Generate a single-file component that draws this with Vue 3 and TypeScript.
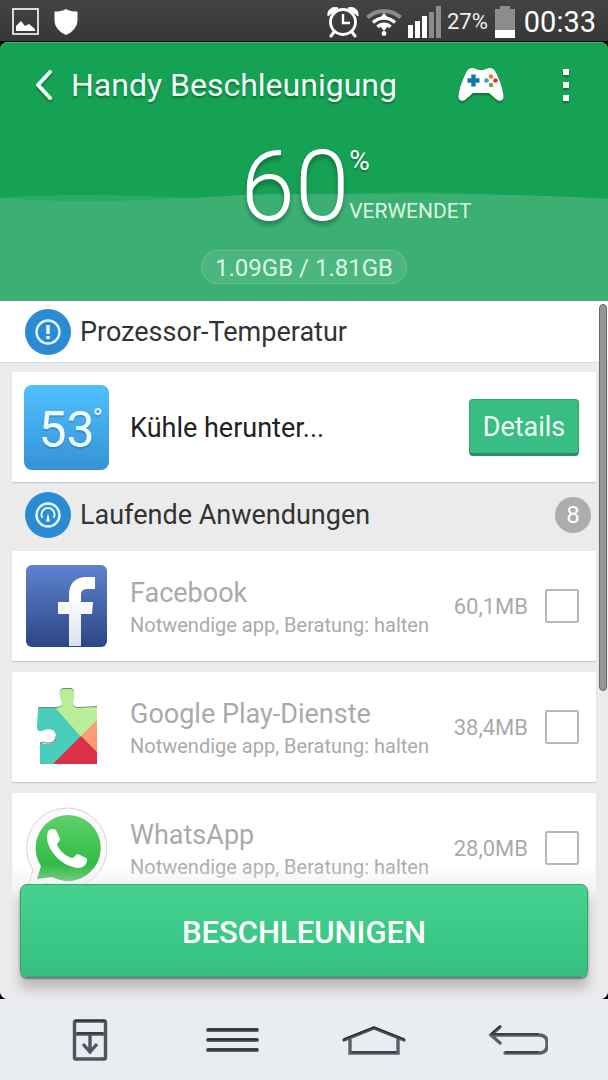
<script setup lang="ts">
import { ref } from 'vue'

interface RunningApp {
  id: string
  name: string
  size: string
  checked: boolean
}

const apps = ref<RunningApp[]>([
  { id: 'facebook', name: 'Facebook', size: '60,1MB', checked: false },
  { id: 'play', name: 'Google Play-Dienste', size: '38,4MB', checked: false },
  { id: 'whatsapp', name: 'WhatsApp', size: '28,0MB', checked: false },
])
</script>

<template>
  <div class="phone">
    <div class="status">
      <svg class="st-pic" viewBox="0 0 27 27" width="27" height="27">
        <rect x="1" y="1" width="25" height="25" fill="none" stroke="#fff" stroke-width="1.6" />
        <path d="M4 23v-5l5-5 4 5 4-2 6 5v2z" fill="#fff" />
      </svg>
      <svg class="st-shield" viewBox="0 0 24 26" width="24" height="26">
        <path d="M12 0C9 2 5 2.500 .5 2.500V11c0 7 5 12 11.500 15C18.500 23 23.500 18 23.500 11V2.500C19 2.500 15 2 12 0z" fill="#fff" />
      </svg>
      <span class="grow"></span>
      <svg class="st-alarm" viewBox="0 0 32 32" width="32" height="32">
        <circle cx="16" cy="16" r="12.500" fill="none" stroke="#fff" stroke-width="2.800" />
        <path d="M16 8v9h7" fill="none" stroke="#fff" stroke-width="2.400" />
        <path d="M1 10C0 4 5 0 11 2zM31 10C32 4 27 0 21 2z" fill="#fff" stroke="#fff" stroke-linejoin="round" />
        <path d="M7 26l-3 4M25 26l3 4" stroke="#fff" stroke-width="3" stroke-linecap="round" />
      </svg>
      <svg class="st-wifi" viewBox="0 0 36 28" width="36" height="28">
        <path d="M1.500 9.500a24 24 0 0 1 33 0" fill="none" stroke="#8c8c8c" stroke-width="4" />
        <path d="M7 14.500a16 16 0 0 1 22 0M11.500 19a9 9 0 0 1 13 0" fill="none" stroke="#fff" stroke-width="3.400" />
        <path d="M18 5l5 6H13zM18 23l-4-5h8z" fill="#fff" />
        <circle cx="18" cy="25.500" r="2.400" fill="#fff" />
      </svg>
      <svg class="st-signal" viewBox="0 0 33 32" width="33" height="32">
        <path d="M0 19h5v13H0zM7 15h5v17H7zM14 10h5v22h-5z" fill="#fff" />
        <path d="M21 6h5v26h-5zM28 0h5v32h-5z" fill="#8c8c8c" />
      </svg>
      <span class="st-pct">27%</span>
      <svg class="st-batt" viewBox="0 0 20 32" width="20" height="32">
        <path d="M5 0h10v3h5v21H0V3h5z" fill="#8c8c8c" />
        <path d="M0 24h20v8H0z" fill="#fff" />
      </svg>
      <span class="st-time">00:33</span>
    </div>

    <main class="app">
      <header class="hero">
        <svg class="wave" viewBox="0 0 608 110" preserveAspectRatio="none">
          <path d="M0 7C50 2 130 4 200 7C260 9 320 3 370 2C430 0 470 2 530 5V20H0z" fill="#28aa63" />
          <path d="M0 7C60 12 150 10 210 6C260 2 300 3 360 3C440 3 540 3 608 8V110H0z" fill="#3cb073" />
        </svg>
        <div class="toolbar">
          <button class="icon-btn back" aria-label="Zurück">
            <svg viewBox="0 0 20 32" width="20" height="32">
              <path d="M16 3L4 16l12 13" fill="none" stroke="#f0fff5" stroke-width="4" stroke-linecap="round" stroke-linejoin="round" />
            </svg>
          </button>
          <h1 class="title">Handy Beschleunigung</h1>
          <span class="grow"></span>
          <button class="icon-btn pad" aria-label="Spiele">
            <svg viewBox="0 0 46 36" width="46" height="36">
              <path d="M9 4C11 0 15 .5 18 2c2 1.500 8 1.500 10 0 3-1.500 7-2 9 2 4 7 8 18 8.500 25 .3 5-4 6-7 3.500L31 26H15l-7.500 6.500C4.500 35 .2 34 .5 29 1 22 5 11 9 4z" fill="#fff" />
              <path d="M15.500 7.500v12M9.500 13.500h12" stroke="#1279a8" stroke-width="4.400" />
              <circle cx="33" cy="9.500" r="2.300" fill="#f08020" />
              <circle cx="37.500" cy="13.500" r="2.300" fill="#e02c48" />
              <circle cx="33" cy="18" r="2.300" fill="#6cae2c" />
              <circle cx="28.500" cy="13.500" r="2.300" fill="#38a0e0" />
            </svg>
          </button>
          <button class="icon-btn more" aria-label="Mehr">
            <svg viewBox="0 0 6 32" width="6" height="32">
              <path d="M0 0h6v6H0zM0 13h6v6H0zM0 26h6v6H0z" fill="#fff" />
            </svg>
          </button>
        </div>
        <div class="usage">
          <span class="usage-num">60</span>
          <span class="usage-side">
            <span class="usage-pct">%</span>
            <span class="usage-word">VERWENDET</span>
          </span>
        </div>
        <div class="memory">1.09GB / 1.81GB</div>
      </header>

      <div class="list">
        <section class="head head-cpu">
          <svg class="head-icon" viewBox="0 0 46 46" width="46" height="46">
            <circle cx="23" cy="23" r="23" fill="#2a8ad2" />
            <circle cx="23" cy="23" r="11.500" fill="none" stroke="#e4f4ff" stroke-width="2.400" />
            <path d="M23 16v9M23 27v3" stroke="#fff" stroke-width="3.400" />
          </svg>
          <h2>Prozessor-Temperatur</h2>
        </section>

        <section class="card cpu">
          <div class="temp">53<span class="deg">°</span></div>
          <span class="cpu-text">Kühle herunter...</span>
          <button class="details">Details</button>
        </section>

        <section class="head head-run">
          <svg class="head-icon" viewBox="0 0 46 46" width="46" height="46">
            <circle cx="23" cy="23" r="23" fill="#2a8ad2" />
            <circle cx="23" cy="23" r="11.500" fill="none" stroke="#e4f4ff" stroke-width="2.400" />
            <path d="M17 25a6.500 6.500 0 1 1 12 0" fill="none" stroke="#e4f4ff" stroke-width="2" stroke-linecap="round" />
            <path d="M23 21l1.800 8.500h-3.600z" fill="#fff" />
          </svg>
          <h2>Laufende Anwendungen</h2>
          <span class="grow"></span>
          <span class="count">8</span>
        </section>

        <label v-for="app in apps" :key="app.id" class="card row">
          <svg v-if="app.id === 'facebook'" class="logo" viewBox="0 0 84 84" width="84" height="84">
            <defs>
              <linearGradient id="fb" x1="0" y1="0" x2="0" y2="1">
                <stop offset="0" stop-color="#5f82d0" />
                <stop offset="1" stop-color="#2b4684" />
              </linearGradient>
              <linearGradient id="fbf" x1="0" y1="0" x2="0" y2="1">
                <stop offset="0.300" stop-color="#fff" />
                <stop offset="1" stop-color="#d9e1f2" />
              </linearGradient>
            </defs>
            <rect x="2" y="1" width="81" height="82" rx="6" fill="url(#fb)" />
            <path d="M45 82V50H34V38h11V31C45 19 52 13 62 13h9v12h-7c-5 0-7 2-7 6v7h12l-1 12H57v32z" fill="url(#fbf)" />
          </svg>
          <svg v-else-if="app.id === 'play'" class="logo" viewBox="0 0 84 84" width="84" height="84">
            <defs>
              <clipPath id="puzzle">
                <path d="M13 20H30C36 20 38 18 37 14L35 8C34 1 37 1 42 1S50 1 49 8L48 14C47 18 49 20 55 20L72 19V76H15V58C15 54 16 53 20 55C26 57 31 55 31 49S26 40 20 42C15 44 12 44 12 39z" />
              </clipPath>
            </defs>
            <g transform="translate(1 3)">
              <path d="M13 19H30C36 19 38 17 37 13L35 7C34 0 37 0 42 0S50 0 49 7L48 13C47 17 49 19 55 19L72 18V76H15V57L31 55z" fill="#7d8076" />
              <path d="M17 55C22 58 31 57 31 49V46L15 52V57z" fill="#7d8076" />
              <g clip-path="url(#puzzle)">
                <path d="M0 0h84v84H0z" fill="#48cdbb" />
                <path d="M13 0h71v20L56 49z" fill="#b8ee98" />
                <path d="M56 48L84 20v60z" fill="#fb9b72" />
                <path d="M56 48L20 84h72z" fill="#dc3048" />
              </g>
              <path d="M15 54C20 57 31 57 31 48C31 43 26 40 20 42C15 44 12 44 12 41L8 41V58h6z" fill="#fff" />
              <path d="M15 56C17 52 20 55 23 55C28 55 31 52 31 48" fill="none" stroke="#7d8076" />
            </g>
          </svg>
          <svg v-else class="logo" viewBox="0 0 84 84" width="84" height="84">
            <defs>
              <linearGradient id="wa" x1="0" y1="0" x2="0" y2="1">
                <stop offset="0" stop-color="#5fd16a" />
                <stop offset="1" stop-color="#22b33a" />
              </linearGradient>
            </defs>
            <g transform="translate(1 1)">
              <path d="M42 1a40 40 0 0 1 0 80c-7 0-13-2-19-5L2 82l6-19A40 40 0 0 1 42 1z" fill="#fafafa" stroke="#dccfd8" />
              <path d="M42 8a33 33 0 1 1-15 62l-15 2 4-13A33 33 0 0 1 42 8z" fill="url(#wa)" />
              <path d="M24 23c4-2 7-1 8 2l3 7c0 2-3 4-3 6 3 6 8 11 15 13 2 0 4-4 6-4l8 4c2 1 1 4 0 6-3 4-8 5-13 3C36 57 24 45 22 32c0-3 0-7 2-9z" fill="#fff" />
            </g>
          </svg>
          <span class="info">
            <span class="name">{{ app.name }}</span>
            <span class="note">Notwendige app, Beratung: halten</span>
          </span>
          <span class="size">{{ app.size }}</span>
          <input v-model="app.checked" type="checkbox" class="tick" />
        </label>
      </div>

      <div class="scrollbar"></div>
      <div class="footer">
        <button class="boost">BESCHLEUNIGEN</button>
      </div>
    </main>

    <nav class="nav">
      <button class="nav-btn" aria-label="Benachrichtigungen">
        <svg viewBox="0 0 60 46" width="60" height="46" fill="none" stroke="#50545f" stroke-width="3.400">
          <rect x="14.500" y="4" width="31" height="38" rx="1.500" />
          <path d="M14 17h32M30 17v17M23 27l7 8 7-8" />
          <path d="M15 3.500h30M17 16h26" stroke="#2b2e34" stroke-width="1.500" />
        </svg>
      </button>
      <button class="nav-btn" aria-label="Menü">
        <svg viewBox="0 0 60 46" width="60" height="46" fill="none" stroke-linecap="round">
          <path d="M8 13h49M8 23h49M8 33h49" stroke="#5c606b" stroke-width="4" />
          <path d="M8 12.500h49M8 22.500h49M8 32.500h49" stroke="#2b2e34" stroke-width="2" />
        </svg>
      </button>
      <button class="nav-btn" aria-label="Startseite">
        <svg viewBox="0 0 68 46" width="68" height="46" fill="none" stroke="#5c606b" stroke-width="3.400" stroke-linecap="round">
          <path d="M10 23v13h48V23" />
          <path d="M4 23L34 11l30 12" stroke="#50545f" />
          <path d="M4 22L34 10l30 12M12 35h44" stroke="#2b2e34" stroke-width="1.600" />
        </svg>
      </button>
      <button class="nav-btn" aria-label="Zurück">
        <svg viewBox="0 0 60 46" width="60" height="46" fill="none" stroke="#5c606b" stroke-width="3.400" stroke-linecap="round">
          <path d="M5 18h45q9 0 9 7v4q0 7-9 7H17M12 10L3 18l9 8" />
          <path d="M5 17h45M18 35h32M12 9L3 17" stroke="#2b2e34" stroke-width="1.600" />
        </svg>
      </button>
    </nav>
  </div>
</template>

<style>
body {
  margin: 0;
  background: #000;
}
</style>

<style scoped>
* {
  box-sizing: border-box;
}
.phone {
  display: flex;
  flex-direction: column;
  height: 100vh;
  background: #000;
  font-family: Roboto, "Liberation Sans", sans-serif;
}
svg {
  display: block;
  flex: none;
}
button {
  border: 0;
  padding: 0;
  background: none;
  font-family: inherit;
  cursor: pointer;
}
h1,
h2 {
  margin: 0;
  font-weight: 400;
}
.grow {
  flex: 1;
}
.status {
  flex: none;
  display: flex;
  align-items: center;
  height: 41px;
  margin-bottom: 1px;
  padding: 2px 12px 0;
  background: linear-gradient(#444, #373737);
  color: #fff;
}
.st-shield {
  margin-left: 15px;
}
.st-wifi {
  margin-left: 7px;
}
.st-signal {
  margin-left: 6px;
}
.st-pct {
  margin: 0 7px 0 6px;
  font-size: 22px;
  color: #eee;
}
.st-time {
  margin-left: 9px;
  font-size: 29px;
}
.app {
  position: relative;
  flex: 1;
  min-height: 0;
  display: flex;
  flex-direction: column;
  overflow: hidden;
  border-radius: 8px;
  background: #ebebeb;
}
.hero {
  position: relative;
  flex: none;
  display: flex;
  flex-direction: column;
  align-items: center;
  padding-bottom: 17px;
  background: #16a255;
  border-top: 1px solid #47b478;
}
.wave {
  position: absolute;
  left: 0;
  bottom: 0;
  width: 100%;
  height: 110px;
}
.toolbar {
  position: relative;
  align-self: stretch;
  display: flex;
  align-items: center;
  height: 84px;
  padding: 0 39px 0 34px;
}
.icon-btn svg {
  filter: drop-shadow(0 2px 1px rgba(0, 0, 0, 0.3));
}
.title {
  margin-left: 17px;
  font-size: 32px;
  line-height: 40px;
  color: #f0fff5;
  text-shadow: 0 2px 2px rgba(0, 0, 0, 0.3);
}
.more {
  margin-left: 59px;
}
.usage {
  position: relative;
  display: flex;
  margin-left: 104px;
  color: #fff;
}
.usage-num {
  font-size: 98px;
  font-weight: 300;
  line-height: 119px;
  text-shadow: 0 4px 4px rgba(0, 0, 0, 0.3);
}
.usage-side {
  display: flex;
  flex-direction: column;
  padding-top: 18px;
}
.usage-pct {
  font-size: 28px;
  line-height: 32px;
  text-shadow: 0 2px 2px rgba(0, 0, 0, 0.3);
}
.usage-word {
  margin-top: 20px;
  font-size: 21px;
  line-height: 28px;
  color: #dcf6e6;
}
.memory {
  position: relative;
  height: 34px;
  margin-top: 4px;
  padding: 0 13px;
  border: 1px solid rgba(255, 255, 255, 0.14);
  border-radius: 17px;
  background: rgba(255, 255, 255, 0.08);
  font-size: 24px;
  line-height: 34px;
  color: #dcf6e6;
}
.list {
  flex: 1;
  min-height: 0;
  overflow: hidden;
}
.head {
  display: flex;
  align-items: center;
  gap: 9px;
  padding: 0 17px 0 25px;
  color: #333;
}
.head h2 {
  font-size: 27px;
}
.head-cpu {
  height: 62px;
  margin-bottom: 9px;
  background: #fff;
  border-bottom: 1px solid #dcdcdc;
}
.head-run {
  height: 69px;
  padding-bottom: 4px;
}
.count {
  width: 36px;
  height: 36px;
  border-radius: 18px;
  background: #adadad;
  color: #fff;
  font-size: 24px;
  line-height: 36px;
  text-align: center;
}
.card {
  display: flex;
  align-items: center;
  height: 110px;
  margin: 0 12px;
  background: #fff;
  box-shadow: 0 1px 1px #c8c8c8;
}
.cpu {
  padding: 0 17px 0 12px;
}
.temp {
  position: relative;
  width: 85px;
  height: 85px;
  border-radius: 8px;
  background: linear-gradient(#4fc1fe, #3592d6);
  color: #f0faff;
  font-size: 50px;
  line-height: 90px;
  text-align: center;
  text-shadow: 0 2px 1px rgba(0, 0, 0, 0.15);
}
.deg {
  position: absolute;
  top: 17px;
  right: 6px;
  font-size: 28px;
  line-height: 33px;
}
.cpu-text {
  flex: 1;
  margin-left: 21px;
  padding-top: 2px;
  font-size: 27px;
  color: #222;
}
.details {
  width: 110px;
  height: 57px;
  padding-top: 2px;
  border: 1px solid #2ca56d;
  border-bottom: 3px solid #27935f;
  border-radius: 4px;
  background: #38bd82;
  color: #f0fff7;
  font-size: 27px;
}
.row {
  margin-bottom: 11px;
  padding: 0 17px 0 12px;
}
.info {
  flex: 1;
  display: flex;
  flex-direction: column;
  margin-left: 22px;
  padding-top: 4px;
  white-space: nowrap;
}
.name {
  font-size: 27px;
  line-height: 34px;
  color: #aaa;
}
.note {
  font-size: 20px;
  line-height: 30px;
  color: #aaa;
}
.size {
  font-size: 22px;
  color: #aaa;
}
.tick {
  appearance: none;
  width: 34px;
  height: 34px;
  margin: 0 0 0 17px;
  border: 2px solid #b8b8b8;
  border-radius: 2px;
  background: #fff;
}
.tick:checked {
  background: #38bd82;
}
.scrollbar {
  position: absolute;
  top: 262px;
  right: 1px;
  width: 8px;
  height: 387px;
  border: 1px solid #6c6c6c;
  border-radius: 4px;
  background: #969696;
}
.footer {
  position: absolute;
  left: 0;
  right: 0;
  bottom: 0;
  padding: 20px 20px 22px;
  background: linear-gradient(rgba(235, 235, 235, 0), #ebebeb 40px);
}
.boost {
  display: block;
  width: 100%;
  height: 93px;
  padding-top: 4px;
  border: 1px solid #36a870;
  border-radius: 7px;
  background: linear-gradient(#45d290, #35c080);
  box-shadow: 0 2px 2px #777, 0 12px 12px #bbb;
  color: #fff;
  font-size: 31px;
  font-weight: 500;
}
.nav {
  flex: none;
  display: flex;
  align-items: center;
  justify-content: space-between;
  height: 81px;
  padding: 0 60px;
  background: #e9ecf0;
}
</style>
